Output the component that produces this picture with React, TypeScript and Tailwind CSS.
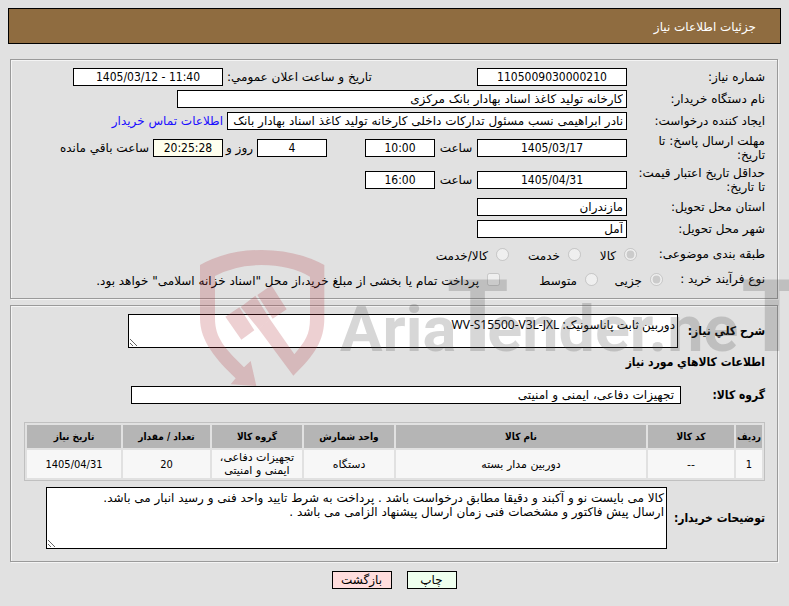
import type { ReactNode } from "react";

const field =
  "h-[18px] border border-black px-[3px] text-[12px] leading-[16px] text-black outline-none";
const panel =
  "border border-[#9a9a9a] shadow-[1px_1px_0_#f4f4f4,inset_1px_1px_0_#f4f4f4] pl-[13px] pr-3";
const narrow = "font-['DejaVu_Sans_Condensed','DejaVu_Sans',sans-serif]";

function Row({ label, id, h, children }: { label: string; id?: string; h: string; children: ReactNode }) {
  return (
    <div className={`flex items-center ${h}`}>
      <label htmlFor={id} className="w-[138px] shrink-0 pl-1 leading-[14px]">
        {label}
      </label>
      {children}
    </div>
  );
}

function Box({ id, value, className, label }: { id?: string; value: string; className: string; label?: string }) {
  return <input id={id} aria-label={label} readOnly defaultValue={value} className={`${field} ${className}`} />;
}

function Figure({ id, value, className, label, tint }: { id?: string; value: string; className: string; label?: string; tint?: boolean }) {
  return (
    <Box id={id} label={label} value={value} className={`text-center ${narrow} ${tint ? "bg-[#ffffee]" : "bg-white"} ${className}`} />
  );
}

function Choice({ name, text, checked, type = "radio", className }: { name: string; text: string; checked?: boolean; type?: string; className: string }) {
  return (
    <label className={`flex shrink-0 items-center gap-2 pt-1 ${className}`}>
      <input type={type} name={name} disabled defaultChecked={checked} className="mb-1 size-[13px]" />
      <span>{text}</span>
    </label>
  );
}

const columns = [
  { title: "ردیف", value: "1", width: "w-[26px]", numeric: true },
  { title: "کد کالا", value: "--", width: "w-[86px]" },
  { title: "نام کالا", value: "دوربین مدار بسته", width: "" },
  { title: "واحد شمارش", value: "دستگاه", width: "w-[90px]" },
  { title: "گروه کالا", value: "تجهیزات دفاعی، ایمنی و امنیتی", width: "w-[90px]" },
  { title: "تعداد / مقدار", value: "20", width: "w-[87px]", numeric: true },
  { title: "تاریخ نیاز", value: "1405/04/31", width: "w-[94px]", numeric: true },
];

function Watermark() {
  return (
    <svg
      aria-hidden="true"
      className="pointer-events-none absolute left-[180px] top-[230px] h-[170px] w-[609px]"
      viewBox="0 0 1827 510"
    >
      <g fill="#b1333c" fillOpacity="0.23">
        <path d="M60 105Q140 60 245 60Q350 60 433 105V265C433 330 405 375 340 437L236 297L270 268L343 373C375 335 390 315 390 265V140Q330 105 245 105Q165 105 105 138V265C105 325 135 355 192 412L212 393L229 468L152 463L167 445C110 390 60 335 60 265Z" />
        <path d="M136 260L178 232L223 301L184 329ZM182 231L226 197L270 268L236 297ZM232 195L274 166L320 238L278 266Z" />
      </g>
      <g
        fontFamily="Roboto, sans-serif"
        fontWeight="700"
        fill="#4b4b4b"
        fillOpacity="0.22"
        direction="ltr"
      >
        <text x="480" y="364" fontSize="190">Aria</text>
        <text x="800" y="364" fontSize="300">T</text>
        <text x="922" y="364" fontSize="194">ender.ne</text>
        <text x="1684" y="364" fontSize="300">T</text>
      </g>
    </svg>
  );
}

export default function App() {
  return (
    <div
      dir="rtl"
      className="relative min-h-screen overflow-hidden bg-[#e1e1e1] p-2 pb-4 font-['DejaVu_Sans',sans-serif] text-[12px] leading-[14px] text-black"
    >
      <header className="flex h-9 items-center border border-black bg-[#8f6c40] px-6 pt-[2px] text-white">
        <h1>جزئیات اطلاعات نیاز</h1>
      </header>

      <form className="ml-[2px] mr-[3px] mt-[15px]">
        <section className={`${panel} pb-2 pt-[6px]`}>
          <Row label="شماره نیاز:" id="need" h="h-[22px]">
            <Figure id="need" value="1105009030000210" className="w-[150px]" />
            <label htmlFor="announce" className="mr-auto ml-1 whitespace-nowrap">
              تاریخ و ساعت اعلان عمومي:
            </label>
            <Figure id="announce" value="1405/03/12 - 11:40" className="ml-[49px] w-[150px] [direction:ltr]" />
          </Row>
          <Row label="نام دستگاه خریدار:" id="buyer" h="h-[22px]">
            <Box id="buyer" value="کارخانه تولید کاغذ اسناد بهادار بانک مرکزی" className="w-[450px] bg-white" />
          </Row>
          <Row label="ایجاد کننده درخواست:" id="creator" h="h-[22px]">
            <Box
              id="creator"
              value="نادر ابراهیمی نسب مسئول تدارکات داخلی کارخانه تولید کاغذ اسناد بهادار بانک مرکزی"
              className="w-[400px] bg-white"
            />
            <a href="#contact" className="mr-1 whitespace-nowrap text-[#1a0dff]">
              اطلاعات تماس خریدار
            </a>
          </Row>
          <Row label="مهلت ارسال پاسخ: تا تاریخ:" id="deadline" h="h-8">
            <Figure id="deadline" value="1405/03/17" className="w-[150px]" />
            <span className="w-[42px] text-center">ساعت</span>
            <Figure label="ساعت" value="10:00" className="w-[70px]" />
            <Figure label="روز" value="4" className="mr-[38px] w-[70px]" />
            <span className="w-[34px] pr-1">روز و</span>
            <Figure label="ساعت باقي مانده" value="20:25:28" tint className="w-[70px]" />
            <span className="mr-1 whitespace-nowrap">ساعت باقي مانده</span>
          </Row>
          <Row label="حداقل تاریخ اعتبار قیمت: تا تاریخ:" id="valid" h="h-8">
            <Figure id="valid" value="1405/04/31" className="w-[150px]" />
            <span className="w-[42px] text-center">ساعت</span>
            <Figure label="ساعت" value="16:00" className="w-[70px]" />
          </Row>
          <Row label="استان محل تحویل:" id="province" h="h-[22px]">
            <Box id="province" value="مازندران" className="w-[150px] bg-white" />
          </Row>
          <Row label="شهر محل تحویل:" id="city" h="h-[22px]">
            <Box id="city" value="آمل" className="w-[150px] bg-white" />
          </Row>
          <div className="flex h-7 items-center">
            <span className="w-[128px] shrink-0">طبقه بندی موضوعی:</span>
            <Choice name="kind" text="کالا" checked className="w-14" />
            <Choice name="kind" text="خدمت" className="w-[72px]" />
            <Choice name="kind" text="کالا/خدمت" className="" />
          </div>
          <div className="flex h-[22px] items-center whitespace-nowrap">
            <span className="w-[102px] shrink-0">نوع فرآیند خرید :</span>
            <Choice name="process" text="جزیی" checked className="w-[65px]" />
            <Choice name="process" text="متوسط" className="w-[98px]" />
            <Choice
              name="treasury"
              type="checkbox"
              text={'پرداخت تمام یا بخشی از مبلغ خرید،از محل "اسناد خزانه اسلامی" خواهد بود.'}
              className=""
            />
          </div>
        </section>

        <section className={`${panel} mt-[6px] pb-3 pt-2`}>
          <div className="flex items-center gap-1">
            <label htmlFor="summary" className={`w-[83px] shrink-0 whitespace-nowrap font-bold ${narrow}`}>شرح کلي نیاز:</label>
            <textarea
              id="summary"
              readOnly
              defaultValue="دوربین ثابت پاناسونیک: WV-S15500-V3L-JXL"
              className="h-[34px] w-[550px] border border-black bg-white px-[2px] py-[3px] font-['Noto_Sans','DejaVu_Sans',sans-serif]"
            />
          </div>
          <h2 className={`py-[7px] font-bold ${narrow}`}>اطلاعات کالاهاي مورد نیاز</h2>
          <div className="mt-[10px] flex items-center">
            <label htmlFor="group" className={`w-[84px] shrink-0 font-bold ${narrow}`}>گروه کالا:</label>
            <Box id="group" value="تجهیزات دفاعی، ایمنی و امنیتی" className="w-[550px] bg-white pr-[6px]" />
          </div>
          <table className="mt-[18px] w-full table-fixed border-separate border-spacing-[2px] border border-[#c0c0c0] text-center text-[11px] leading-[13px]">
            <thead>
              <tr className="h-[23px] bg-[#b5b5b5]">
                {columns.map((c) => (
                  <th key={c.title} className={`whitespace-nowrap p-0 text-[10px] ${narrow} ${c.width}`}>{c.title}</th>
                ))}
              </tr>
            </thead>
            <tbody>
              <tr className="h-7 bg-[#f7f7f7]">
                {columns.map((c) => (
                  <td key={c.title} className={`p-px ${c.numeric ? narrow : ""}`}>{c.value}</td>
                ))}
              </tr>
            </tbody>
          </table>
          <div className="mt-[6px] flex items-center">
            <label htmlFor="notes" className={`w-[98px] shrink-0 whitespace-nowrap font-bold ${narrow}`}>توضیحات خریدار:</label>
            <textarea
              id="notes"
              readOnly
              defaultValue={
                "کالا می بایست نو و آکبند و دقیقا مطابق درخواست باشد . پرداخت به شرط تایید واحد فنی و رسید انبار می باشد.\nارسال پیش فاکتور و مشخصات فنی زمان ارسال پیشنهاد الزامی می باشد ."
              }
              className="h-[62px] w-[621px] border border-black bg-white px-[2px] py-[3px]"
            />
          </div>
        </section>

        <div className="mt-[9px] flex justify-center gap-[15px]">
          <button type="button" className="h-[18px] w-[50px] border border-black bg-[#eeffee]">چاپ</button>
          <button type="button" className="h-[18px] w-[60px] border border-black bg-[#ffdddd]">بازگشت</button>
        </div>
      </form>
      <Watermark />
    </div>
  );
}
